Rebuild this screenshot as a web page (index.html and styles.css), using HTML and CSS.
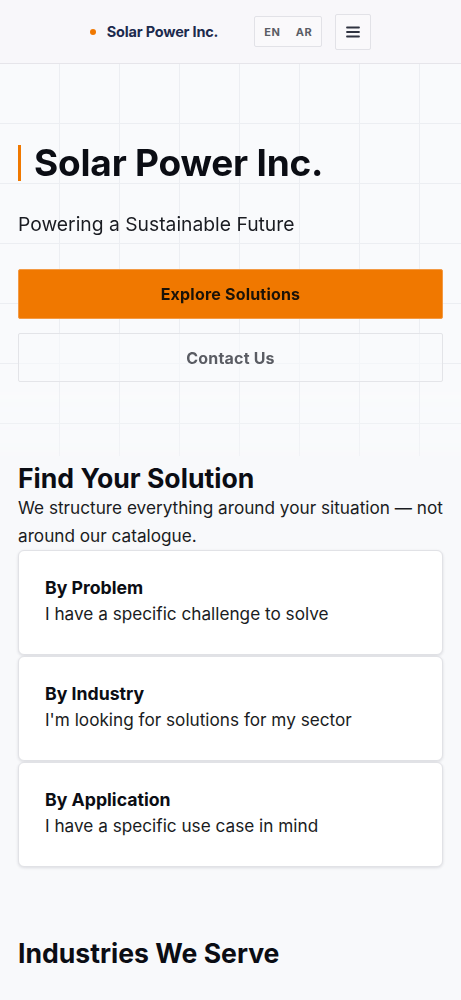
FILE: index.html
```html
<!DOCTYPE html>
<html lang="en">
<head>
<meta charset="utf-8">
<meta name="viewport" content="width=device-width, initial-scale=1">
<title>Solar Power Inc.</title>
<link rel="stylesheet" href="styles.css">
</head>
<body>
<header class="site-header">
  <a class="brand" href="#"><span class="brand-dot"></span><span class="brand-name">Solar Power Inc.</span></a>
  <div class="lang-switch"><span class="lang">EN</span><span class="lang">AR</span></div>
  <button class="menu-btn" aria-label="Menu">
    <svg width="14" height="12" viewBox="0 0 14 12" aria-hidden="true"><path d="M1 1.5h12M1 6h12M1 10.5h12" stroke="#2f3340" stroke-width="1.8" stroke-linecap="round"/></svg>
  </button>
</header>
<main>
  <section class="hero">
    <h1 class="hero-title">Solar Power Inc.</h1>
    <p class="hero-sub">Powering a Sustainable Future</p>
    <div class="hero-actions">
      <a class="btn btn-primary" href="#">Explore Solutions</a>
      <a class="btn btn-outline" href="#">Contact Us</a>
    </div>
  </section>
  <section class="finder">
    <h2 class="section-title">Find Your Solution</h2>
    <p class="section-lead">We structure everything around your situation — not around our catalogue.</p>
    <div class="cards">
      <a class="card" href="#"><span class="card-title">By Problem</span><span class="card-text">I have a specific challenge to solve</span></a>
      <a class="card" href="#"><span class="card-title">By Industry</span><span class="card-text">I'm looking for solutions for my sector</span></a>
      <a class="card" href="#"><span class="card-title">By Application</span><span class="card-text">I have a specific use case in mind</span></a>
    </div>
  </section>
  <section class="industries">
    <h2 class="section-title">Industries We Serve</h2>
  </section>
</main>
</body>
</html>
```
FILE: styles.css
```css
* { box-sizing: border-box; }
html, body { margin: 0; padding: 0; }
body {
  font-family: Inter, "Noto Sans", sans-serif;
  background: #f8f9fb;
  color: #0b0d14;
}
a { text-decoration: none; color: inherit; }

.site-header {
  height: 64px;
  background: #f8f7fa;
  border-bottom: 1px solid #e6e5ea;
  display: flex;
  align-items: center;
  justify-content: center;
}
.brand {
  display: flex;
  align-items: center;
  gap: 11px;
  margin-right: 36px;
}
.brand-dot {
  width: 6px; height: 6px;
  border-radius: 50%;
  background: #f07800;
}
.brand-name {
  font-size: 14.5px;
  font-weight: 700;
  color: #1c2a4d;
  letter-spacing: -0.2px;
}
.lang-switch {
  width: 68px; height: 31px;
  border: 1px solid #e2e2e7;
  border-radius: 2px;
  display: flex;
  align-items: center;
  justify-content: space-between;
  padding: 0 9px;
  background: #faf9fb;
}
.lang {
  font-size: 11px;
  font-weight: 700;
  color: #5a5d66;
  letter-spacing: 0.5px;
}
.menu-btn {
  margin-left: 13px;
  width: 36px; height: 36px;
  border: 1px solid #e2e2e7;
  border-radius: 2px;
  background: #faf9fb;
  display: flex;
  align-items: center;
  justify-content: center;
  padding: 0;
}

.hero {
  padding: 81px 18px 74px;
  background-color: #f9fafc;
  background-image:
    linear-gradient(to right, transparent 59px, #eceef2 59px, #eceef2 60px),
    linear-gradient(to bottom, transparent 59px, #eceef2 59px, #eceef2 60px);
  background-size: 60px 60px;
  -webkit-mask-image: linear-gradient(to bottom, #000 80%, rgba(0,0,0,0.55) 100%);
  mask-image: linear-gradient(to bottom, #000 80%, rgba(0,0,0,0.55) 100%);
}
.hero-title {
  margin: 0;
  font-size: 37px;
  line-height: 36px;
  font-weight: 700;
  letter-spacing: -0.2px;
  border-left: 3px solid #f07800;
  padding-left: 13px;
  color: #0b0d14;
}
.hero-sub {
  margin: 29px 0 0;
  font-size: 19.3px;
  line-height: 28px;
  color: #1a1c22;
}
.hero-actions {
  margin-top: 31px;
  display: flex;
  flex-direction: column;
  gap: 14px;
}
.btn {
  display: flex;
  align-items: center;
  justify-content: center;
  height: 49px;
  font-size: 16px;
  letter-spacing: 0.2px;
  font-weight: 700;
  border-radius: 2px;
}
.btn-primary {
  background: #f07800;
  color: #1a1208;
  border: 1px solid #f39a45;
  height: 50px;
}
.btn-outline {
  border: 1px solid #e3e4e8;
  color: #5a5c63;
  background: rgba(249,250,252,0.6);
}

.finder { padding: 6px 18px 0; }
.section-title {
  margin: 0;
  font-size: 26.6px;
  line-height: 32px;
  font-weight: 700;
  color: #0b0d14;
}
.section-lead {
  margin: 0;
  font-size: 17.2px;
  line-height: 28px;
  color: #1a1c22;
}
.cards {
  display: flex;
  flex-direction: column;
  gap: 1px;
}
.card {
  display: flex;
  flex-direction: column;
  background: #fff;
  border: 1px solid #e1e2e6;
  border-radius: 6px;
  box-shadow: 0 1px 3px rgba(20,20,40,0.12);
  padding: 24px 26px 27px;
  min-height: 105px;
}
.card-title {
  font-size: 17.7px;
  line-height: 26px;
  font-weight: 700;
  color: #0b0d14;
}
.card-text {
  font-size: 17.2px;
  line-height: 26px;
  color: #1a1c22;
}
.industries { padding: 70px 18px 40px; }
```
